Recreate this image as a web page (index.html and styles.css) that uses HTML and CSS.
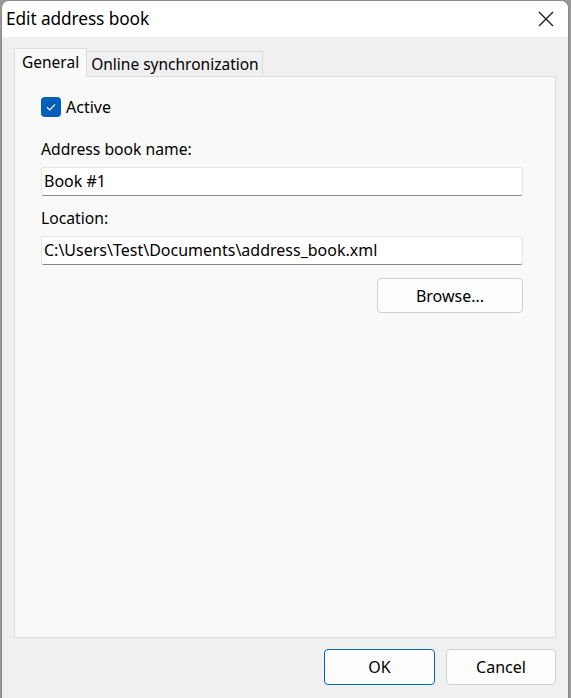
FILE: index.html
```html
<!DOCTYPE html>
<html>
<head>
<meta charset="utf-8">
<link rel="stylesheet" href="styles.css">
</head>
<body>
<div class="window">
  <div class="titlebar">
    <span class="title">Edit address book</span>
    <span class="close">
      <svg width="16" height="16" viewBox="0 0 16 16"><path d="M1 1 L15 15 M15 1 L1 15" stroke="#1a1a1a" stroke-width="1.3" fill="none"/></svg>
    </span>
  </div>
  <div class="body">
    <div class="tabs">
      <div class="tab active">General</div>
      <div class="tab">Online synchronization</div>
    </div>
    <div class="panel">
      <label class="check">
        <span class="box"><svg width="12" height="12" viewBox="0 0 12 12"><path d="M2 6.3 L4.8 9 L10 3.4" stroke="#fff" stroke-width="1.2" fill="none"/></svg></span>
        <span>Active</span>
      </label>
      <div class="label">Address book name:</div>
      <div class="input">Book #1</div>
      <div class="label">Location:</div>
      <div class="input">C:\Users\Test\Documents\address_book.xml</div>
      <div class="browse-row"><div class="btn browse">Browse...</div></div>
    </div>
    <div class="footer">
      <div class="btn ok">OK</div>
      <div class="btn cancel">Cancel</div>
    </div>
  </div>
</div>
</body>
</html>
```
FILE: styles.css
```css
* { box-sizing: border-box; }
html, body { margin: 0; padding: 0; }
body {
  width: 571px; height: 698px; overflow: hidden;
  background: #9a9a9a;
  font-family: "Noto Sans", "Open Sans", sans-serif;
  color: #000;
}
.window {
  width: 568px; height: 698px;
  margin-left: 1px;
  border: 1px solid #8a8a8a;
  border-bottom: none;
  border-radius: 8px 8px 0 0;
  background: #f0f0f0;
  overflow: hidden;
  display: flex; flex-direction: column;
}
.titlebar {
  height: 36px; background: #fff;
  display: flex; align-items: center; justify-content: space-between;
  padding: 0 14px 0 4px;
  flex-shrink: 0;
}
.title { font-size: 17.3px; letter-spacing: -0.1px; margin-top: -1px; }
.close { display: flex; width: 16px; height: 16px; }
.body { flex: 1; display: flex; flex-direction: column; padding: 11px 12px 0 12px; }
.tabs { display: flex; align-items: flex-end; height: 28px; position: relative; z-index: 1; }
.tab {
  font-size: 15.5px; line-height: 24px; height: 25px;
  padding: 0 3px 0 4px;
  background: #f0f0f0;
  border: 1px solid #dcdcdc; border-bottom: none;
}
.tab.active {
  background: #f9f9f9;
  padding: 0 7px 0 7px;
  margin-bottom: -1px; height: 29px; line-height: 27px;
}
.tab + .tab { border-left: none; }
.panel {
  height: 562px;
  background: #f9f9f9; border: 1px solid #dcdcdc;
  padding: 20px 32px 0 26px;
  font-size: 15.7px;
}
.check { display: flex; align-items: center; gap: 5px; font-size: 16px; height: 20px; }
.box {
  width: 20px; height: 20px; border-radius: 4px; background: #005fb8;
  display: flex; align-items: center; justify-content: center;
}
.label { font-size: 15.7px; height: 22px; line-height: 22px; }
.check + .label { margin-top: 21px; }
.input {
  margin-top: 7px;
  height: 29px; line-height: 27px;
  background: #fff;
  border: 1px solid #e5e5e5; border-bottom-color: #8a8a8a;
  border-radius: 3px;
  padding: 0 2px;
  font-size: 16px;
}
.input + .label { margin-top: 11px; }
.browse-row { display: flex; justify-content: flex-end; margin-top: 13px; }
.btn {
  background: #fdfdfd; border: 1px solid #d0d0d0; border-radius: 4px;
  display: flex; align-items: center; justify-content: center;
  font-size: 16px;
}
.browse { width: 146px; height: 35px; }
.footer { display: flex; justify-content: flex-end; gap: 11px; padding-top: 11px; }
.ok { width: 111px; height: 36px; border-color: #0067c0; }
.cancel { width: 110px; height: 36px; }
```
